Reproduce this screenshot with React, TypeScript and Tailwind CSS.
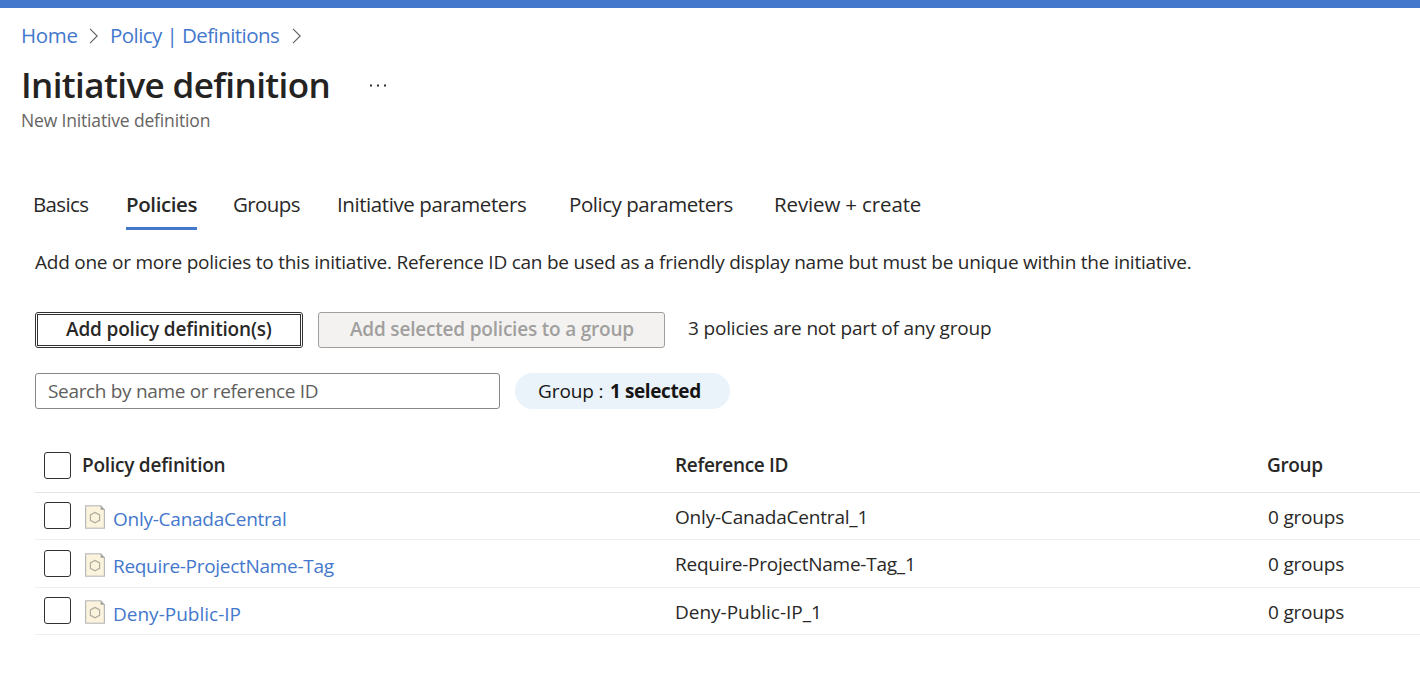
import type { ReactNode } from "react";

const rows = [
  { name: "Only-CanadaCentral", nameCls: "tracking-[-0.25px]", ref: "Only-CanadaCentral_1", refCls: "tracking-[-0.2px]", h: "h-[47px]", box: "mt-[9px]", icon: "mt-3" },
  { name: "Require-ProjectName-Tag", nameCls: "tracking-[-0.3px]", ref: "Require-ProjectName-Tag_1", refCls: "tracking-[-0.25px]", h: "h-12", box: "mt-[10px]", icon: "mt-[13px]" },
  { name: "Deny-Public-IP", nameCls: "tracking-[0px]", ref: "Deny-Public-IP_1", refCls: "tracking-[-0.02px]", h: "h-[47px]", box: "mt-[9px]", icon: "mt-3" },
];

const tabs = [
  { label: "Basics", cls: "ml-[33px] w-[93px] tracking-[-0.65px]" },
  { label: "Policies", cls: "w-[107px] tracking-[-0.4px] font-semibold", active: true },
  { label: "Groups", cls: "w-[104px] tracking-[-0.6px]" },
  { label: "Initiative parameters", cls: "w-[232px] tracking-[-0.42px]" },
  { label: "Policy parameters", cls: "w-[205px] tracking-[-0.45px]" },
  { label: "Review + create", cls: "tracking-[-0.14px]" },
];

function Chevron() {
  return (
    <svg className="mt-[5px] h-4 w-[10px] shrink-0" viewBox="0 0 10 16" fill="none" stroke="#605e5c" strokeWidth="1.1">
      <path d="M1 0.8 8.2 8 1 15.2" />
    </svg>
  );
}

function Checkbox({ className }: { className: string }) {
  return (
    <span
      role="checkbox"
      aria-checked="false"
      className={`h-[27px] w-[27px] shrink-0 rounded-[3px] border border-[#323130] bg-white ${className}`}
    />
  );
}

function PolicyIcon({ className }: { className: string }) {
  return (
    <svg className={`h-6 w-5 shrink-0 ${className}`} viewBox="0 0 20 24" fill="none">
      <path d="M0.7 0.7H16L19.3 4.4V23.3H0.7Z" fill="#fbf3dc" />
      <path d="M0.6 0V24M19.4 4V24" stroke="#b9b9b9" strokeWidth="1.2" />
      <path d="M0 0.7H16M0 23.3H20" stroke="#c9c9c7" strokeWidth="1.4" />
      <path d="M15.6 0 20 4.8H15.6Z" fill="#a3a3a3" />
      <path d="M10 7.4 14.6 9.9V15.3L10 17.8 5.4 15.3V9.9Z" stroke="#b0aca0" strokeWidth="1.2" />
    </svg>
  );
}

function Row({ children, className }: { children: ReactNode; className: string }) {
  return (
    <div className={`ml-[35px] grid shrink-0 grid-cols-[640px_592px_1fr] border-b ${className}`}>{children}</div>
  );
}

export default function App() {
  return (
    <div className="flex h-[673px] w-[1420px] flex-col overflow-hidden bg-white font-['Open_Sans',sans-serif] text-[19px] leading-6 whitespace-nowrap text-[#292827]">
      <div className="h-2 shrink-0 bg-[#4478cd]" />

      <nav className="mt-[15px] flex h-6 shrink-0 pl-[21px] text-[20.5px] text-[#4478cd]">
        <a className="w-[68px] tracking-[-0.3px]">Home</a>
        <Chevron />
        <a className="ml-[11px] w-[182px] tracking-[-0.56px]">Policy | Definitions</a>
        <Chevron />
      </nav>

      <div className="mt-4 flex h-11 shrink-0 pl-[21px]">
        <h1 className="w-[349px] text-[35px] leading-[44px] font-semibold tracking-[-0.6px] text-[#242322]">Initiative definition</h1>
        <svg className="mt-[21px] h-[3px] w-4" viewBox="0 0 16 3" fill="#323130">
          <path d="M0 .5h2v2H0zM7 .5h2v2H7zM14 .5h2v2h-2z" />
        </svg>
      </div>
      <div className="mt-px h-6 shrink-0 pl-[21px] text-[17.5px] tracking-[-0.16px] text-[#666462]">New Initiative definition</div>

      <div className="mt-[60px] flex h-[38px] shrink-0 text-[20.5px]">
        {tabs.map((t) => (
          <div key={t.label} className={t.cls}>
            {t.active ? <span className="inline-block h-[38px] w-[71px] border-b-3 border-[#4478cd]">{t.label}</span> : t.label}
          </div>
        ))}
      </div>

      <p className="mt-5 h-6 shrink-0 pl-[35px] tracking-[-0.235px]">
        Add one or more policies to this initiative. Reference ID can be used as a friendly display name but must be unique within the initiative.
      </p>

      <div className="mt-[38px] flex h-9 shrink-0 pl-[35px]">
        <button className="flex w-[268px] rounded-[3px] border border-[#323130] p-px">
          <span className="h-full w-full border border-[#323130] pt-[2px] pl-[28px] text-left font-semibold tracking-[-0.17px]">Add policy definition(s)</span>
        </button>
        <button className="ml-[15px] w-[347px] rounded-[3px] border border-[#a19f9d] bg-[#f3f2f1] pb-[2px] pl-[31px] text-left font-semibold tracking-[-0.2px] text-[#a19f9d]">
          Add selected policies to a group
        </button>
        <span className="ml-[23px] pt-[4px] tracking-[-0.17px]">3 policies are not part of any group</span>
      </div>

      <div className="mt-[25px] flex h-9 shrink-0 pl-[35px]">
        <div className="w-[465px] rounded-[3px] border border-[#8a8886] pt-[5px] pl-3 tracking-[-0.33px] text-[#605e5c]">Search by name or reference ID</div>
        <div className="ml-[15px] flex w-[215px] rounded-full bg-[#eaf2fa] pt-[6px] pl-[23px] text-[#161514]">
          <span className="w-[72px] tracking-[-0.1px]">Group :</span>
          <span className="font-bold tracking-[-0.4px]">1 selected</span>
        </div>
      </div>

      <Row className="mt-[31px] h-[53px] border-[#e5e5e5] font-semibold">
        <div className="flex">
          <Checkbox className="mt-3 ml-[9px]" />
          <span className="ml-[11px] pt-[13px] tracking-[-0.22px]">Policy definition</span>
        </div>
        <span className="pt-[13px] tracking-[-0.35px]">Reference ID</span>
        <span className="pt-[13px] tracking-[-0.35px]">Group</span>
      </Row>

      {rows.map((r) => (
        <Row key={r.name} className={`${r.h} border-[#f0efee]`}>
          <div className="flex">
            <Checkbox className={`ml-[9px] ${r.box}`} />
            <PolicyIcon className={`ml-[14px] ${r.icon}`} />
            <a className={`pt-[14px] ml-2 text-[#4478cd] ${r.nameCls}`}>{r.name}</a>
          </div>
          <span className={`pt-3 ${r.refCls}`}>{r.ref}</span>
          <span className="pt-3 pl-px tracking-[-0.2px]">0 groups</span>
        </Row>
      ))}
    </div>
  );
}
